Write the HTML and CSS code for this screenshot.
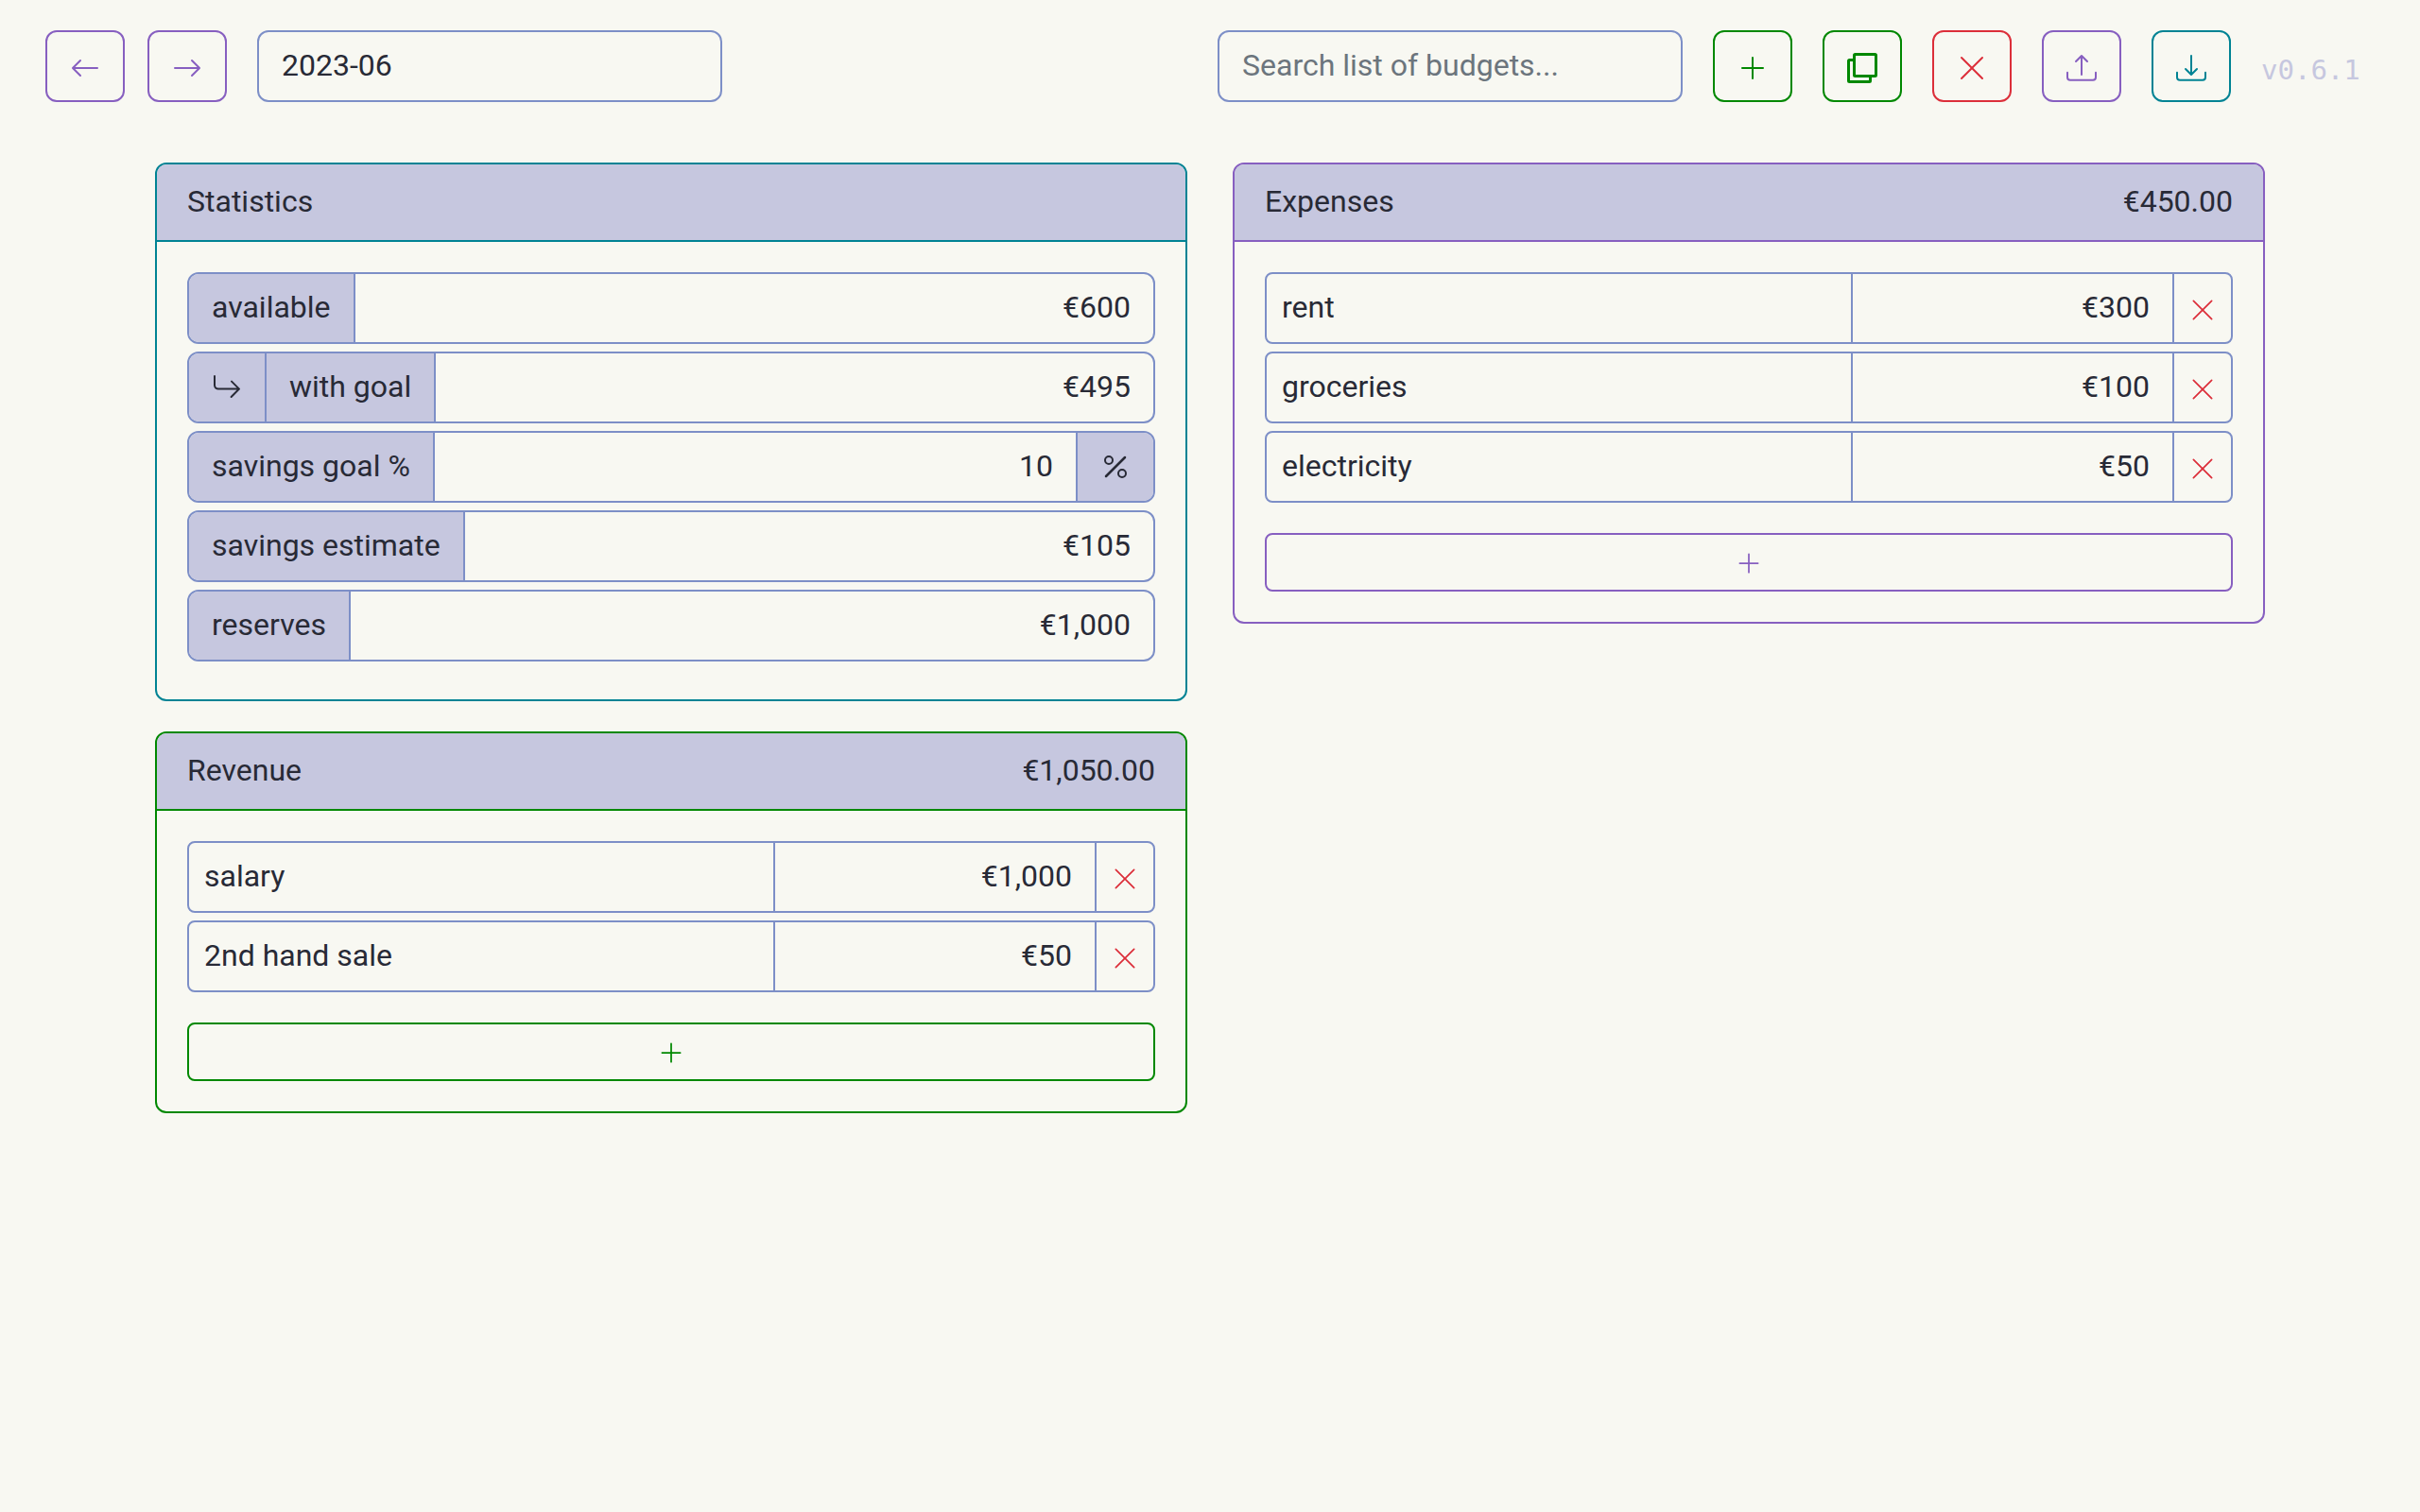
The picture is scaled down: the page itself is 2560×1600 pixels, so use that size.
FILE: index.html
```html
<!DOCTYPE html>
<html lang="en">
<head>
<meta charset="utf-8">
<title>Budget 2023-06</title>
<link rel="stylesheet" href="styles.css">
</head>
<body>
<svg class="sprite" aria-hidden="true">
  <symbol id="arrow-left" viewBox="0 0 16 16"><path fill-rule="evenodd" d="M15 8a.5.5 0 0 0-.5-.5H2.707l3.147-3.146a.5.5 0 1 0-.708-.708l-4 4a.5.5 0 0 0 0 .708l4 4a.5.5 0 0 0 .708-.708L2.707 8.5H14.5A.5.5 0 0 0 15 8z"/></symbol>
  <symbol id="arrow-right" viewBox="0 0 16 16"><path fill-rule="evenodd" d="M1 8a.5.5 0 0 1 .5-.5h11.793l-3.147-3.146a.5.5 0 0 1 .708-.708l4 4a.5.5 0 0 1 0 .708l-4 4a.5.5 0 0 1-.708-.708L13.293 8.5H1.5A.5.5 0 0 1 1 8z"/></symbol>
  <symbol id="plus" viewBox="0 0 16 16"><path fill-rule="evenodd" d="M8 2a.5.5 0 0 1 .5.5v5h5a.5.5 0 0 1 0 1h-5v5a.5.5 0 0 1-1 0v-5h-5a.5.5 0 0 1 0-1h5v-5A.5.5 0 0 1 8 2z"/></symbol>
  <symbol id="cross" viewBox="0 0 16 16"><path d="M2.146 2.854a.5.5 0 1 1 .708-.708L8 7.293l5.146-5.147a.5.5 0 0 1 .708.708L8.707 8l5.147 5.146a.5.5 0 0 1-.708.708L8 8.707l-5.146 5.147a.5.5 0 0 1-.708-.708L7.293 8 2.146 2.854z"/></symbol>
  <symbol id="copy" viewBox="0 0 32 32"><g fill="none" stroke="currentColor" stroke-width="3"><rect x="7.5" y="1.5" width="23" height="23" rx="1"/><path d="M7.500 7.500H2.500a1 1 0 0 0-1 1V29.500a1 1 0 0 0 1 1H23.500a1 1 0 0 0 1-1V25"/></g></symbol>
  <symbol id="upload" viewBox="0 0 16 16"><path d="M.5 9.900a.5.5 0 0 1 .5.5v2.500a1 1 0 0 0 1 1h12a1 1 0 0 0 1-1v-2.500a.5.5 0 0 1 1 0v2.500a2 2 0 0 1-2 2H2a2 2 0 0 1-2-2v-2.500a.5.5 0 0 1 .5-.5z"/><path d="M7.646 1.146a.5.5 0 0 1 .708 0l3 3a.5.5 0 0 1-.708.708L8.500 2.707V11.500a.5.5 0 0 1-1 0V2.707L5.354 4.854a.5.5 0 1 1-.708-.708l3-3z"/></symbol>
  <symbol id="download" viewBox="0 0 16 16"><path d="M.5 9.900a.5.5 0 0 1 .5.5v2.500a1 1 0 0 0 1 1h12a1 1 0 0 0 1-1v-2.500a.5.5 0 0 1 1 0v2.500a2 2 0 0 1-2 2H2a2 2 0 0 1-2-2v-2.500a.5.5 0 0 1 .5-.5z"/><path d="M7.646 11.854a.5.5 0 0 0 .708 0l3-3a.5.5 0 0 0-.708-.708L8.500 10.293V1.500a.5.5 0 0 0-1 0v8.793L5.354 8.146a.5.5 0 1 0-.708.708l3 3z"/></symbol>
  <symbol id="return" viewBox="0 0 16 16"><path fill-rule="evenodd" d="M1.5 1.5A.5.5 0 0 0 1 2v4.800a2.500 2.500 0 0 0 2.500 2.500h9.793l-3.347 3.346a.5.5 0 0 0 .708.708l4.200-4.200a.5.5 0 0 0 0-.708l-4-4a.5.5 0 0 0-.708.708L13.293 8.300H3.500A1.500 1.500 0 0 1 2 6.800V2a.5.5 0 0 0-.5-.5z"/></symbol>
  <symbol id="percent" viewBox="0 0 16 16"><path d="M13.442 2.558a.625.625 0 0 1 0 .884l-10 10a.625.625 0 1 1-.884-.884l10-10a.625.625 0 0 1 .884 0zM4.500 6a1.500 1.500 0 1 1 0-3 1.500 1.500 0 0 1 0 3zm0 1a2.500 2.500 0 1 0 0-5 2.500 2.500 0 0 0 0 5zm7 6a1.500 1.500 0 1 1 0-3 1.500 1.500 0 0 1 0 3zm0 1a2.500 2.500 0 1 0 0-5 2.500 2.500 0 0 0 0 5z"/></symbol>
</svg>

<header class="toolbar">
  <button class="btn purple" type="button" aria-label="Previous budget"><svg class="icon"><use href="#arrow-left"/></svg></button>
  <button class="btn purple" type="button" aria-label="Next budget"><svg class="icon"><use href="#arrow-right"/></svg></button>
  <input class="field field-name" type="text" value="2023-06" aria-label="Budget name">
  <input class="field field-search" type="text" placeholder="Search list of budgets..." aria-label="Search list of budgets">
  <div class="actions">
    <button class="btn green" type="button" aria-label="New budget"><svg class="icon"><use href="#plus"/></svg></button>
    <button class="btn green" type="button" aria-label="Clone budget"><svg class="icon"><use href="#copy"/></svg></button>
    <button class="btn red" type="button" aria-label="Delete budget"><svg class="icon"><use href="#cross"/></svg></button>
    <button class="btn purple" type="button" aria-label="Import"><svg class="icon"><use href="#upload"/></svg></button>
    <button class="btn teal" type="button" aria-label="Export"><svg class="icon"><use href="#download"/></svg></button>
    <a class="version" href="#">v0.6.1</a>
  </div>
</header>

<main class="board">
  <div class="column">
    <section class="card teal">
      <h2 class="card-head"><span>Statistics</span></h2>
      <div class="card-body stats">
        <div class="group"><label class="tag" for="available">available</label><input class="value" id="available" value="€600" readonly></div>
        <div class="group"><span class="tag tag-symbol"><svg class="tag-icon"><use href="#return"/></svg></span><label class="tag" for="with-goal">with goal</label><input class="value" id="with-goal" value="€495" readonly></div>
        <div class="group"><label class="tag" for="goal">savings goal %</label><input class="value" id="goal" value="10"><span class="tag tag-symbol tag-end"><svg class="tag-icon"><use href="#percent"/></svg></span></div>
        <div class="group"><label class="tag" for="estimate">savings estimate</label><input class="value" id="estimate" value="€105" readonly></div>
        <div class="group"><label class="tag" for="reserves">reserves</label><input class="value" id="reserves" value="€1,000"></div>
      </div>
    </section>

    <section class="card green">
      <h2 class="card-head"><span>Revenue</span><span>€1,050.00</span></h2>
      <div class="card-body">
        <div class="item"><input class="item-name" value="salary" aria-label="Item name"><input class="item-amount" value="€1,000" aria-label="salary amount"><button class="item-delete" type="button" aria-label="Delete salary"><svg class="icon icon-sm"><use href="#cross"/></svg></button></div>
        <div class="item"><input class="item-name" value="2nd hand sale" aria-label="Item name"><input class="item-amount" value="€50" aria-label="2nd hand sale amount"><button class="item-delete" type="button" aria-label="Delete 2nd hand sale"><svg class="icon icon-sm"><use href="#cross"/></svg></button></div>
        <button class="add" type="button" aria-label="Add revenue"><svg class="add-icon"><use href="#plus"/></svg></button>
      </div>
    </section>
  </div>

  <div class="column">
    <section class="card purple">
      <h2 class="card-head"><span>Expenses</span><span>€450.00</span></h2>
      <div class="card-body">
        <div class="item"><input class="item-name" value="rent" aria-label="Item name"><input class="item-amount" value="€300" aria-label="rent amount"><button class="item-delete" type="button" aria-label="Delete rent"><svg class="icon icon-sm"><use href="#cross"/></svg></button></div>
        <div class="item"><input class="item-name" value="groceries" aria-label="Item name"><input class="item-amount" value="€100" aria-label="groceries amount"><button class="item-delete" type="button" aria-label="Delete groceries"><svg class="icon icon-sm"><use href="#cross"/></svg></button></div>
        <div class="item"><input class="item-name" value="electricity" aria-label="Item name"><input class="item-amount" value="€50" aria-label="electricity amount"><button class="item-delete" type="button" aria-label="Delete electricity"><svg class="icon icon-sm"><use href="#cross"/></svg></button></div>
        <button class="add" type="button" aria-label="Add expense"><svg class="add-icon"><use href="#plus"/></svg></button>
      </div>
    </section>
  </div>
</main>
</body>
</html>
```

FILE: styles.css
```css
:root {
  --page: #f8f8f2;
  --text: #282a36;
  --fill: #c6c7df;
  --line: #7d8fc7;
  --muted: #6c757d;
  --purple: #875fc0;
  --green: #008800;
  --teal: #008394;
  --red: #dc2f3a;
}

* { box-sizing: border-box; }

body {
  margin: 0;
  background: var(--page);
  color: var(--text);
  font: 32px/48px Roboto, "Liberation Sans", sans-serif;
}

input, button {
  margin: 0;
  font: inherit;
  color: inherit;
  background: transparent;
}

svg { display: block; fill: currentColor; }
.sprite { display: none; }

.purple { --accent: var(--purple); }
.green { --accent: var(--green); }
.teal { --accent: var(--teal); }
.red { --accent: var(--red); }

/* Toolbar */
.toolbar {
  display: flex;
  align-items: center;
  gap: 24px;
  padding: 32px 48px;
}

.btn {
  display: flex;
  align-items: center;
  justify-content: center;
  flex: none;
  width: 84px;
  height: 76px;
  padding: 0;
  border: 2px solid var(--accent);
  border-radius: 12px;
  color: var(--accent);
}

.icon { width: 32px; height: 32px; margin-top: 4px; }
.icon-sm { width: 28px; height: 28px; }

.field {
  width: 492px;
  min-width: 0;
  height: 76px;
  padding: 11px 24px 13px;
  border: 2px solid var(--line);
  border-radius: 12px;
}
.field::placeholder { color: var(--muted); opacity: 1; }
.field-name { margin-left: 8px; }
.field-search { margin-left: auto; }

.actions {
  display: flex;
  align-items: center;
  gap: 32px;
  margin-left: 8px;
}

.version {
  width: 120px;
  padding-top: 8px;
  color: var(--fill);
  font: 29px/48px "DejaVu Sans Mono", monospace;
  text-decoration: none;
}

/* Cards */
.board {
  display: grid;
  grid-template-columns: 1fr 1fr;
  gap: 48px;
  max-width: 2280px;
  margin: 0 auto;
  padding: 32px 24px;
}

.column {
  display: flex;
  flex-direction: column;
  gap: 32px;
  min-width: 0;
}

.card {
  border: 2px solid var(--accent);
  border-radius: 12px;
  overflow: hidden;
}

.card-head {
  display: flex;
  justify-content: space-between;
  margin: 0;
  padding: 15px 32px 17px;
  background: var(--fill);
  border-bottom: 2px solid var(--accent);
  font-size: 32px;
  font-weight: 400;
}

.card-body {
  display: flex;
  flex-direction: column;
  gap: 8px;
  padding: 32px;
}
.stats { padding-bottom: 40px; }

/* Labelled values */
.group {
  display: flex;
  height: 76px;
  border: 2px solid var(--line);
  border-radius: 12px;
  overflow: hidden;
}

.tag {
  flex: none;
  padding: 11px 24px 13px;
  background: var(--fill);
  border-right: 2px solid var(--line);
}
.tag-symbol { padding: 20px 24px; }
.tag-end { border-right: 0; border-left: 2px solid var(--line); }
.tag-icon { width: 32px; height: 32px; }

.value {
  flex: 1;
  min-width: 0;
  padding: 11px 24px 13px;
  border: 0;
  text-align: right;
}

/* Budget items */
.item {
  display: grid;
  grid-template-columns: 31fr 17fr 60px;
  height: 76px;
  border: 2px solid var(--line);
  border-radius: 8px;
  overflow: hidden;
}

.item-name, .item-amount {
  width: 100%;
  min-width: 0;
  border: 0;
  border-right: 2px solid var(--line);
}
.item-name { padding: 11px 16px 13px; }
.item-amount { padding: 11px 24px 13px; text-align: right; }

.item-delete {
  display: flex;
  align-items: center;
  justify-content: center;
  padding: 0;
  border: 0;
  color: var(--red);
}

.add {
  display: flex;
  align-items: center;
  justify-content: center;
  height: 62px;
  margin-top: 24px;
  border: 2px solid var(--accent);
  border-radius: 8px;
  color: var(--accent);
}
.add-icon { width: 28px; height: 28px; margin-top: 2px; }
```
